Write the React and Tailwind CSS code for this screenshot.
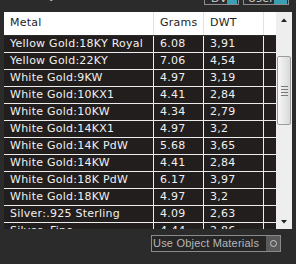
import React from "react";

const rows = [
  ["Yellow Gold:18KY Royal", "6.08", "3,91"],
  ["Yellow Gold:22KY", "7.06", "4,54"],
  ["White Gold:9KW", "4.97", "3,19"],
  ["White Gold:10KX1", "4.41", "2,84"],
  ["White Gold:10KW", "4.34", "2,79"],
  ["White Gold:14KX1", "4.97", "3,2"],
  ["White Gold:14K PdW", "5.68", "3,65"],
  ["White Gold:14KW", "4.41", "2,84"],
  ["White Gold:18K PdW", "6.17", "3,97"],
  ["White Gold:18KW", "4.97", "3,2"],
  ["Silver:.925 Sterling", "4.09", "2,63"],
  ["Silver: Fine", "4.44", "2,86"],
];

export default function App() {
  return (
    <div
      className="w-[296px] h-[264px] overflow-hidden bg-[#2b2b2b] text-[11px] tracking-[0.25px]"
      style={{ fontFamily: '"DejaVu Sans", Verdana, sans-serif' }}
    >
      {/* top strip with cut-off controls */}
      <div className="h-[12px] flex items-end overflow-hidden relative">
        <div className="absolute left-[28px] top-[-12px] text-[#cfcfcf]">Alloy</div>
        <div className="ml-[204px] mb-[7px] flex gap-[4px]">
          <div className="w-[35px] h-[14px] border border-[#8c8c8c] flex items-center justify-between pl-[6px] pr-[1px] text-[#cfcfcf] leading-none">
            <span>DV</span>
            <span className="w-[12px] h-[11px] bg-[#3a9fb2]" />
          </div>
          <div className="w-[46px] h-[14px] border border-[#8c8c8c] flex items-center justify-between pl-[4px] pr-[1px] text-[#cfcfcf] leading-none">
            <span>User</span>
            <span className="w-[14px] h-[11px] bg-[#3a9fb2]" />
          </div>
        </div>
      </div>

      {/* table + scrollbar */}
      <div className="ml-[4px] flex h-[217px] overflow-hidden">
        <div className="w-[272px] flex flex-col">
          <div className="h-[24px] shrink-0 bg-white flex text-[#1e1e1e] border-b border-[#2b2b2b]">
            <div className="w-[150px] border-r border-[#e2e2e2] pl-[6px] flex items-center">Metal</div>
            <div className="w-[50px] border-r border-[#e2e2e2] pl-[6px] flex items-center">Grams</div>
            <div className="w-[60px] border-r border-[#e2e2e2] pl-[6px] flex items-center">DWT</div>
            <div className="w-[12px]" />
          </div>
          {rows.map((r, i) => (
            <div key={i} className="h-[17px] shrink-0 flex border-b border-[#ececec] bg-[#221e1d] text-[#f0f0f0]">
              <div className="w-[150px] border-r border-[#ececec] pl-[6px] flex items-center">{r[0]}</div>
              <div className="w-[50px] border-r border-[#ececec] pl-[6px] flex items-center">{r[1]}</div>
              <div className="w-[60px] border-r border-[#ececec] pl-[6px] flex items-center">{r[2]}</div>
              <div className="w-[12px]" />
            </div>
          ))}
        </div>
        <div className="w-[16px] bg-[#eeeeee] flex flex-col items-center">
          <svg width="16" height="16" viewBox="0 0 16 16" className="shrink-0">
            <path d="M5 10 L8 6.5 L11 10 Z" fill="#222" />
          </svg>
          <div className="mt-[28px] shrink-0 w-[14px] h-[69px] border border-[#9c9c9c] rounded-[2px] bg-gradient-to-r from-[#f7f7f7] to-[#d9d9d9] flex flex-col items-center justify-center gap-[2px]">
            <div className="w-[7px] h-px bg-[#7a7a7a]" />
            <div className="w-[7px] h-px bg-[#7a7a7a]" />
            <div className="w-[7px] h-px bg-[#7a7a7a]" />
            <div className="w-[7px] h-px bg-[#7a7a7a]" />
          </div>
          <div className="flex-1" />
          <svg width="16" height="14" viewBox="0 0 16 14" className="shrink-0">
            <path d="M5 5 L8 8.5 L11 5 Z" fill="#222" />
          </svg>
        </div>
      </div>

      {/* bottom control */}
      <div className="mt-[6px] ml-[151px] w-[130px] h-[17px] border border-[#8a8a8a] bg-[#262626] flex items-center justify-between text-[#b8b8b8]">
        <span
          className="pl-[1px] whitespace-nowrap text-[11px] tracking-[0.2px] leading-none"
          style={{ fontFamily: '"Liberation Sans", Arial, sans-serif' }}
        >
          Use Object Materials
        </span>
        <span className="w-[14px] h-[15px] bg-[#5a5a5a] flex items-center justify-center">
          <span className="w-[7px] h-[7px] rounded-full border border-[#c8c8c8]" />
        </span>
      </div>
    </div>
  );
}
